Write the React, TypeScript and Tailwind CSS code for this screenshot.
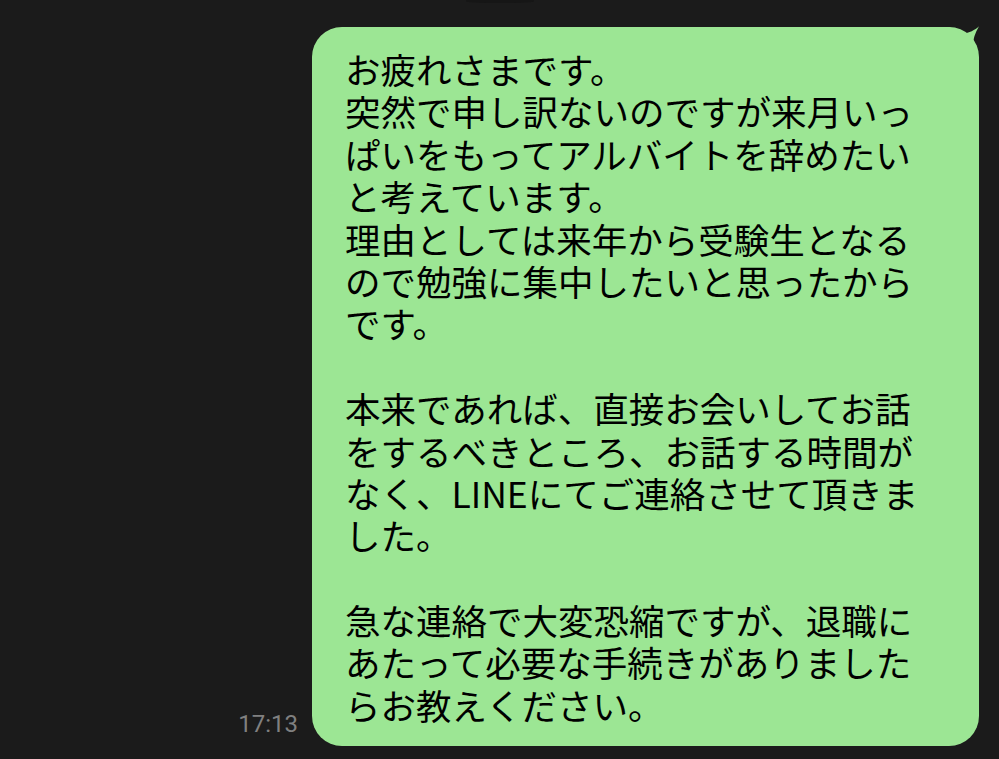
import React from "react";

const lines = [
  "お疲れさまです。",
  "突然で申し訳ないのですが来月いっ",
  "ぱいをもってアルバイトを辞めたい",
  "と考えています。",
  "理由としては来年から受験生となる",
  "ので勉強に集中したいと思ったから",
  "です。",
  "",
  "本来であれば、直接お会いしてお話",
  "をするべきところ、お話する時間が",
  "なく、LINEにてご連絡させて頂きま",
  "した。",
  "",
  "急な連絡で大変恐縮ですが、退職に",
  "あたって必要な手続きがありました",
  "らお教えください。",
];

export default function App() {
  return (
    <div className="min-h-[759px] w-full overflow-hidden bg-[#1b1b1b]">
      <div className="ml-[466px] h-[3px] w-[68px] rounded-b-[50%] bg-[#161616]" />
      <div className="mt-[24px] flex items-end justify-end gap-[14px] pr-[20px]">
        <span className="mb-[8px] text-[24px] leading-[28px] text-[#808080] [font-family:Roboto,'Liberation_Sans',sans-serif]">
          17:13
        </span>
        <div className="relative w-[667px] rounded-[30px] bg-[#9ce694] pb-[20px] pl-[33px] pt-[21px] text-black">
          <div className="text-[35.5px] leading-[42.4px] [font-family:'Noto_Sans_CJK_JP','Noto_Sans',sans-serif]">
            {lines.map((l, i) => (
              <div key={i} className="h-[42.4px] whitespace-nowrap">
                {l}
              </div>
            ))}
          </div>
          <svg
            className="absolute right-0 top-[-1px]"
            width="40"
            height="41"
            viewBox="0 -1 40 41"
          >
            <path
              d="M0 0 L8 0 C15 0 19 6.5 24 6.5 C30 6 36 3 40 -0.8 C36 6 34 12 34 18 C34 26 40 30 40 36 L40 40 L0 40 Z"
              fill="#9ce694"
            />
          </svg>
        </div>
      </div>
    </div>
  );
}
